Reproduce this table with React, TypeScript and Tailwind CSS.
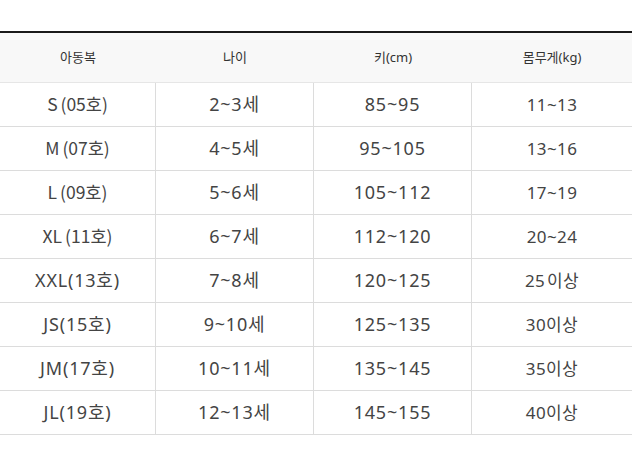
import React from "react";

const rows: [string, string, string, string][] = [
  ["S (05호)", "2~3세", "85~95", "11~13"],
  ["M (07호)", "4~5세", "95~105", "13~16"],
  ["L (09호)", "5~6세", "105~112", "17~19"],
  ["XL (11호)", "6~7세", "112~120", "20~24"],
  ["XXL(13호)", "7~8세", "120~125", "25 이상"],
  ["JS(15호)", "9~10세", "125~135", "30이상"],
  ["JM(17호)", "10~11세", "135~145", "35이상"],
  ["JL(19호)", "12~13세", "145~155", "40이상"],
];

const headers = ["아동복", "나이", "키(cm)", "몸무게(kg)"];

export default function App() {
  return (
    <div
      className="w-[639px] h-[471px] bg-white pt-[31px]"
      style={{ fontFamily: '"Noto Sans", "Noto Sans CJK KR", sans-serif' }}
    >
      <div className="w-[632px] border-t-2 border-[#1a1a1a]">
        <div className="grid grid-cols-[156px_158px_158px_160px] h-[50px] bg-[#f8f8f8] border-b border-[#e6e6e6] text-[13px] text-[#333]">
          {headers.map((h) => (
            <div key={h} className="flex items-center justify-center">
              {h}
            </div>
          ))}
        </div>
        {rows.map((r, i) => (
          <div
            key={i}
            className="grid grid-cols-[156px_158px_158px_160px] h-[44px] border-b border-[#dcdcdc] text-[18px] tracking-[0.8px] [word-spacing:-3px] text-[#444]"
          >
            {r.map((c, j) => (
              <div
                key={j}
                className={`flex items-center justify-center ${j < 3 ? "border-r border-[#dcdcdc]" : ""} ${j === 0 && i < 4 ? "font-['Noto_Sans_CJK_KR',sans-serif] text-[17.5px] tracking-[0px] [word-spacing:-1px]" : ""} ${j === 3 ? "text-[17px] tracking-[0.4px]" : ""}`}
              >
                {c}
              </div>
            ))}
          </div>
        ))}
      </div>
    </div>
  );
}
